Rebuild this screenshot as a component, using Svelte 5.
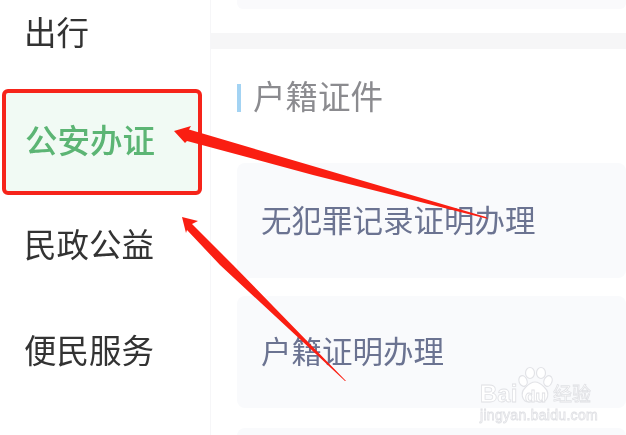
<script>
  const menu = [
    { label: '出行' },
    { label: '公安办证', active: true },
    { label: '民政公益' },
    { label: '便民服务' }
  ];
  const services = ['无犯罪记录证明办理', '户籍证明办理', ''];
</script>

<div class="page">
  <aside class="sidebar">
    {#each menu as item}
      <div class="item" class:active={item.active}>{item.label}</div>
    {/each}
  </aside>
  <main class="content">
    <div class="top-card"></div>
    <div class="band"></div>
    <h2 class="title">户籍证件</h2>
    <div class="list">
      {#each services as s}
        <div class="service">{s}</div>
      {/each}
    </div>
  </main>

  <svg class="marks" width="626" height="435" viewBox="0 0 626 435" aria-hidden="true">
    <polygon fill="#fa1e12" points="174,131 191,126 189,129.5 486,217 488,219 313,175 187,141 185,143" />
    <polygon fill="#fa1e12" points="182,217 198,221 192,224 233,265 346,381 345,381 220,265 187,230 186,233" />
  </svg>

  <div class="watermark">
    <div class="wm-row">
      <span class="wm-bai">Bai</span>
      <svg class="paw" width="36" height="40" viewBox="0 0 36 40">
        <g fill="#fff" stroke="#e2e3e7" stroke-width="1.2">
          <ellipse cx="6" cy="15" rx="4" ry="5.5" transform="rotate(-20 6 15)" />
          <ellipse cx="13" cy="7" rx="4.5" ry="5.5" />
          <ellipse cx="24" cy="7" rx="4.5" ry="5.5" />
          <ellipse cx="31" cy="15" rx="4" ry="5.5" transform="rotate(20 31 15)" />
          <path d="M18 16c5 0 7 3 10 6 5 5 3 14-4 14-3 0-4-1-6-1s-3 1-6 1c-7 0-9-9-4-14 3-3 5-6 10-6z" />
        </g>
      </svg>
      <span class="wm-du">du</span>
      <span class="wm-cn">经验</span>
    </div>
    <div class="wm-url">jingyan.baidu.com</div>
  </div>
</div>

<style>
  :global(body) {
    margin: 0;
    background: #fff;
  }
  .page {
    position: relative;
    display: flex;
    width: 626px;
    height: 435px;
    overflow: hidden;
    background: #fff;
    font-family: "Noto Sans CJK SC", "Liberation Sans", sans-serif;
  }
  .sidebar {
    flex: none;
    width: 210px;
    height: 435px;
    border-right: 1px solid #f6f6f8;
  }
  .item {
    display: flex;
    align-items: center;
    height: 106px;
    box-sizing: border-box;
    padding: 0 0 6px 24px;
    font-size: 32.5px;
    color: #333;
    filter: blur(0.5px);
  }
  .item:first-child {
    height: 66px;
  }
  .item:nth-child(2) {
    height: 106px;
    margin: 23px 8px 0 2px;
    border: 4px solid #f6241a;
    border-radius: 6px;
    background: #f1faf4;
    color: #5cb574;
    font-weight: 500;
    padding: 0 0 8px 19px;
  }
  .item:nth-child(3) {
    height: 100px;
  }
  .item:nth-child(4) {
    height: 112px;
  }
  .content {
    flex: 1;
    min-width: 0;
  }
  .top-card {
    height: 9px;
    margin-left: 26px;
    background: #fafafc;
    border-radius: 0 0 6px 6px;
  }
  .band {
    height: 16px;
    margin-top: 24px;
    background: #f6f6f7;
  }
  .title {
    height: 96px;
    margin: 0 0 0 26px;
    padding: 0 0 0 16px;
    font-size: 32.5px;
    font-weight: 400;
    line-height: 92px;
    color: #8b8b8f;
    position: relative;
    filter: blur(0.4px);
  }
  .title::before {
    content: "";
    position: absolute;
    left: 0;
    top: 35px;
    width: 4px;
    height: 28px;
    background: #a3d3f3;
  }
  .list {
    display: flex;
    flex-direction: column;
    margin-top: 18px;
    margin-left: 26px;
  }
  .service {
    display: flex;
    align-items: center;
    flex: none;
    height: 115px;
    margin-bottom: 18px;
    padding: 0 0 4px 24px;
    box-sizing: border-box;
    border-radius: 8px;
    background: #f9fafc;
    font-size: 30.5px;
    color: #6b7391;
    filter: blur(0.4px);
  }
  .service:nth-child(2) {
    height: 112px;
    margin-bottom: 20px;
  }
  .marks {
    position: absolute;
    left: 0;
    top: 0;
  }
  .watermark {
    position: absolute;
    left: 480px;
    top: 366px;
    width: 130px;
    font-family: "Liberation Sans", sans-serif;
    color: #fff;
    -webkit-text-stroke: 0.8px #e0e1e5;
    filter: blur(0.4px);
  }
  .wm-row {
    position: relative;
    height: 42px;
  }
  .wm-bai {
    position: absolute;
    left: 0;
    top: 14px;
    font-size: 24px;
    font-weight: 700;
  }
  .paw {
    position: absolute;
    left: 37px;
    top: 0;
  }
  .wm-du {
    position: absolute;
    left: 45px;
    top: 21px;
    font-size: 17px;
    font-weight: 700;
  }
  .wm-cn {
    position: absolute;
    left: 73px;
    top: 13px;
    font-family: "Noto Sans CJK SC", sans-serif;
    font-size: 19px;
    line-height: 27px;
  }
  .wm-url {
    font-size: 14px;
    line-height: 14px;
    white-space: nowrap;
    letter-spacing: 0.3px;
  }
</style>
